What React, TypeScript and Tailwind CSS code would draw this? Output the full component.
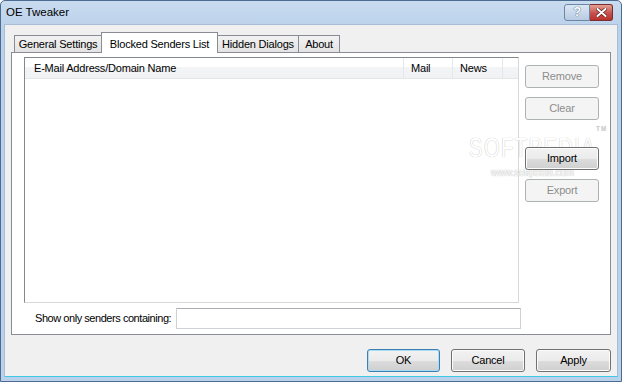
import React from "react";

const font = "font-['Liberation_Sans',Arial,sans-serif]";

function Btn({ label, disabled, primary, w = "w-[74px]" }: { label: string; disabled?: boolean; primary?: boolean; w?: string }) {
  if (disabled) {
    return (
      <div className={`${w} h-[23px] relative z-10 rounded-[3px] border border-[#adb2b5] bg-[#f4f4f4] flex items-center justify-center text-[#8d8d8d]`}>
        {label}
      </div>
    );
  }
  return (
    <div
      className={`${w} h-[23px] relative z-10 rounded-[3px] border ${primary ? "border-[#3c7fb1] shadow-[inset_0_0_0_1px_#a8dcf5]" : "border-[#707070] shadow-[inset_0_0_0_1px_#fcfcfc]"} bg-[linear-gradient(#f2f2f2_0%,#ebebeb_50%,#dddddd_51%,#cfcfcf_100%)] flex items-center justify-center text-black`}
    >
      {label}
    </div>
  );
}

function Tab({ label, active, w }: { label: string; active?: boolean; w: string }) {
  if (active) {
    return (
      <div className={`${w} h-[21px] -mb-px z-10 border border-b-0 border-[#898c95] bg-white flex items-start justify-center pt-[3px] text-black whitespace-nowrap`}>
        {label}
      </div>
    );
  }
  return (
    <div className={`${w} h-[17px] self-end border border-b-0 border-[#898c95] bg-[linear-gradient(#f2f2f2,#e3e3e3)] flex items-center justify-center text-black -ml-px first:ml-0 whitespace-nowrap`}>
      {label}
    </div>
  );
}

export default function App() {
  return (
    <div className={`${font} text-[11px] tracking-[-0.2px] relative w-[622px] h-[382px] overflow-hidden flex flex-col border border-[#4c6b92] rounded-t-[5px] bg-[linear-gradient(#c9dbef,#b9d1ea_30px,#b9d1ea)]`}>
      {/* title bar */}
      <div className="h-[23px] flex items-center pl-[5px] pr-[8px] shrink-0">
        <span className="text-[11.5px] tracking-normal text-black">OE Tweaker</span>
        <div className="ml-auto flex items-center mt-[-1px]">
          <div className="w-[26px] h-[17px] rounded-l-[3px] border border-[#6c86a6] bg-[linear-gradient(#dbe6f3,#b8cbe2)] flex items-center justify-center">
            <span className="text-[13px] font-bold text-white [text-shadow:0_0_1px_#4b6485,0_0_1px_#4b6485]">?</span>
          </div>
          <div className="w-[23px] h-[17px] rounded-r-[3px] border border-l-0 border-[#7b2c2c] bg-[linear-gradient(#e4a090,#c75050_55%,#b9322a)] flex items-center justify-center">
            <svg width="11" height="9" viewBox="0 0 11 9">
              <path d="M1.5 1 L9.5 8 M9.5 1 L1.5 8" stroke="#5a1d18" strokeWidth="3.4" strokeLinecap="round" />
              <path d="M1.5 1 L9.5 8 M9.5 1 L1.5 8" stroke="#ffffff" strokeWidth="2" strokeLinecap="round" />
            </svg>
          </div>
        </div>
      </div>

      {/* client area */}
      <div className="flex-1 mx-[3px] mb-[4px] bg-[#f0f0f0] border border-[#a9bdd6] border-b-[#40c8e8] flex flex-col px-[6px] pt-[6px]">
        {/* tabs */}
        <div className="flex items-end pl-[3px] h-[21px]">
          <Tab label="General Settings" w="w-[88px]" />
          <Tab label="Blocked Senders List" active w="w-[117px] -ml-[1px]" />
          <Tab label="Hidden Dialogs" w="w-[82px]" />
          <Tab label="About" w="w-[42px]" />
        </div>

        {/* panel */}
        <div className="h-[283px] border border-[#898c95] bg-white flex flex-col pl-[12px] pr-[11px] pt-[4px]">
          <div className="flex gap-[6px]">
            {/* list view */}
            <div className="w-[497px] h-[246px] border border-t-[#828790] border-l-[#828790] border-r-[#d8d8d8] border-b-[#d8d8d8] bg-white flex flex-col">
              <div className="h-[21px] flex items-stretch bg-[linear-gradient(#ffffff,#ffffff_45%,#f3f4f6_46%,#f1f2f4)] border-b border-[#e5e5e5]">
                <div className="w-[379px] border-r border-[#e3e8ee] pl-[9px] flex items-center">E-Mail Address/Domain Name</div>
                <div className="w-[49px] border-r border-[#e3e8ee] pl-[7px] flex items-center">Mail</div>
                <div className="w-[50px] border-r border-[#e3e8ee] pl-[7px] flex items-center">News</div>
                <div className="flex-1" />
              </div>
            </div>
            {/* side buttons */}
            <div className="flex flex-col pt-[8px]">
              <Btn label="Remove" disabled />
              <div className="h-[9px]" />
              <Btn label="Clear" disabled />
              <div className="h-[27px]" />
              <Btn label="Import" />
              <div className="h-[9px]" />
              <Btn label="Export" disabled />
            </div>
          </div>

          {/* filter row */}
          <div className="flex items-center mt-[5px]">
            <span className="pl-[11px] w-[152px] shrink-0 whitespace-nowrap overflow-hidden tracking-[-0.45px]">Show only senders containing:</span>
            <div className="w-[345px] h-[21px] border border-[#cfd3d8] border-t-[#abadb3] bg-white" />
          </div>
        </div>

        {/* bottom buttons */}
        <div className="flex justify-end gap-[11px] mt-[14px]">
          <Btn label="OK" primary w="w-[73px]" />
          <Btn label="Cancel" w="w-[74px]" />
          <Btn label="Apply" w="w-[75px]" />
        </div>
      </div>

      {/* softpedia watermark */}
      <div className="absolute left-[468px] top-[132px] pointer-events-none flex flex-col items-start">
        <span className="origin-left scale-x-[0.72] text-[28px] leading-[30px] tracking-[2px] text-white [text-shadow:0_0_1px_#c8c8c8,0_0_1px_#c8c8c8] whitespace-nowrap">
          SOFTPEDIA<sup className="text-[8px] text-[#d0d0d0] align-top">TM</sup>
        </span>
        <span className="ml-[22px] mt-[2px] text-[10px] text-white [text-shadow:0_0_1px_#bdbdbd,0_0_1px_#bdbdbd]">www.softpedia.com</span>
      </div>
    </div>
  );
}
